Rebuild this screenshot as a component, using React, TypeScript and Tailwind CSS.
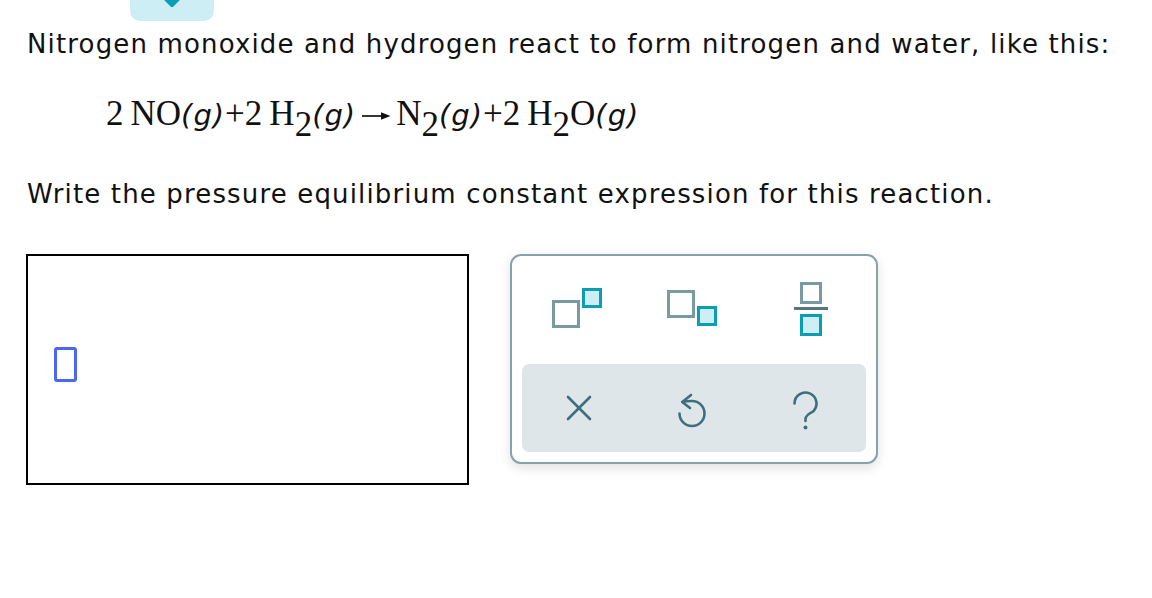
import React from "react";

const sans = { fontFamily: '"DejaVu Sans", Verdana, sans-serif' };

function G() {
  return (
    <span
      className="text-[29px] tracking-[1px]"
      style={{ fontFamily: '"DejaVu Sans", Verdana, sans-serif', fontStyle: "italic" }}
    >
      (g)
    </span>
  );
}

function Sub({ n }: { n: string }) {
  return <span className="relative top-[11px]">{n}</span>;
}

export default function App() {
  return (
    <div className="w-[1152px] h-[598px] bg-white text-black relative overflow-hidden" style={sans}>
      {/* top tab */}
      <div className="absolute left-[130px] top-0 w-[84px] h-[21px] bg-[#cdeef4] rounded-b-[10px] flex justify-center">
        <div className="w-[14px] h-[14px] bg-[#0a9fb5] rotate-45 -mt-[9px] rounded-[2px]" />
      </div>

      <div className="pt-[28px] pl-[27px]">
        <p className="text-[26px] leading-[32px] tracking-[1.15px] text-[#111] whitespace-nowrap">
          Nitrogen monoxide and hydrogen react to form nitrogen and water, like this:
        </p>

        <div
          className="pl-[79px] mt-[38px] text-[35px] leading-[32px] text-[#111] whitespace-nowrap"
          style={{ fontFamily: '"Liberation Serif", "Times New Roman", serif' }}
        >
          2&thinsp;NO<G />+2&thinsp;H<Sub n="2" /><G />
          <span className="inline-block w-[30px] mx-[5px] relative -top-[4px]">
            <svg width="30" height="10" viewBox="0 0 30 10">
              <line x1="1" y1="5" x2="22" y2="5" stroke="#111" strokeWidth="1.7" />
              <path d="M20 1.3 L29.5 5 L20 8.7 Z" fill="#111" />
            </svg>
          </span>
          N<Sub n="2" /><G />+2&thinsp;H<Sub n="2" />O<G />
        </div>

        <p className="text-[26px] leading-[32px] tracking-[1.15px] text-[#111] mt-[47px] whitespace-nowrap">
          Write the pressure equilibrium constant expression for this reaction.
        </p>

        <div className="flex items-start mt-[44px] -ml-[1px]">
          {/* answer box */}
          <div className="w-[443px] h-[231px] border-2 border-black pl-[26px] pt-[91px]">
            <div className="w-[23px] h-[35px] border-[3px] border-[#4a68f5] rounded-[3px]" />
          </div>

          {/* palette */}
          <div className="ml-[41px] w-[368px] h-[210px] border-2 border-[#86a2aa] rounded-[11px] bg-white shadow-[0_4px_12px_rgba(0,0,0,0.12)] px-[10px] pt-[10px]">
            <div className="h-[98px] flex">
              <div className="flex-1 flex justify-center items-start pt-[22px] pr-[5px]">
                <div className="flex items-start">
                  <div className="w-[28px] h-[28px] border-[3px] border-[#779aa3] mt-[12px]" />
                  <div className="w-[20px] h-[20px] border-[3px] border-[#0b9eb3] bg-[#cdeef4] ml-[2px]" />
                </div>
              </div>
              <div className="flex-1 flex justify-center items-start pt-[24px]">
                <div className="flex items-start">
                  <div className="w-[28px] h-[28px] border-[3px] border-[#779aa3]" />
                  <div className="w-[20px] h-[20px] border-[3px] border-[#0b9eb3] bg-[#cdeef4] ml-[2px] mt-[16px]" />
                </div>
              </div>
              <div className="flex-1 flex justify-center items-start pt-[16px] pl-[8px]">
                <div className="flex flex-col items-center">
                  <div className="w-[22px] h-[22px] border-[3px] border-[#779aa3]" />
                  <div className="w-[34px] h-[3px] bg-[#55767f] mt-[3px] mb-[4px]" />
                  <div className="w-[22px] h-[22px] border-[3px] border-[#0b9eb3] bg-[#cdeef4]" />
                </div>
              </div>
            </div>
            <div className="h-[88px] bg-[#dfe6e9] rounded-[7px] flex items-center">
              <div className="flex-1 flex justify-center">
                <svg width="26" height="26" viewBox="0 0 26 26" fill="none" stroke="#3f6f7c" strokeWidth="2.6" strokeLinecap="round">
                  <line x1="2" y1="2" x2="24" y2="24" />
                  <line x1="24" y1="2" x2="2" y2="24" />
                </svg>
              </div>
              <div className="flex-1 flex justify-center pt-[4px]">
                <svg width="32" height="38" viewBox="0 0 32 38" fill="none" stroke="#3f6f7c" strokeWidth="2.6" strokeLinecap="round" strokeLinejoin="round">
                  <path d="M3.5 22.5 A12.5 12.5 0 1 0 16 10 Q10 10 6.3 11" />
                  <path d="M15 4 L6.3 11 L14 17" />
                </svg>
              </div>
              <div className="flex-1 flex justify-center pt-[6px] pr-[4px]">
                <svg width="29" height="42" viewBox="0 0 29 42" fill="none" stroke="#3f6f7c" strokeWidth="2.6" strokeLinecap="round">
                  <path d="M3.5 13.5 A11 11 0 1 1 22.3 21.3 Q14.5 25 14.5 29 L14.5 31" />
                  <circle cx="14.5" cy="37.5" r="2" fill="#3f6f7c" stroke="none" />
                </svg>
              </div>
            </div>
          </div>
        </div>
      </div>
    </div>
  );
}
